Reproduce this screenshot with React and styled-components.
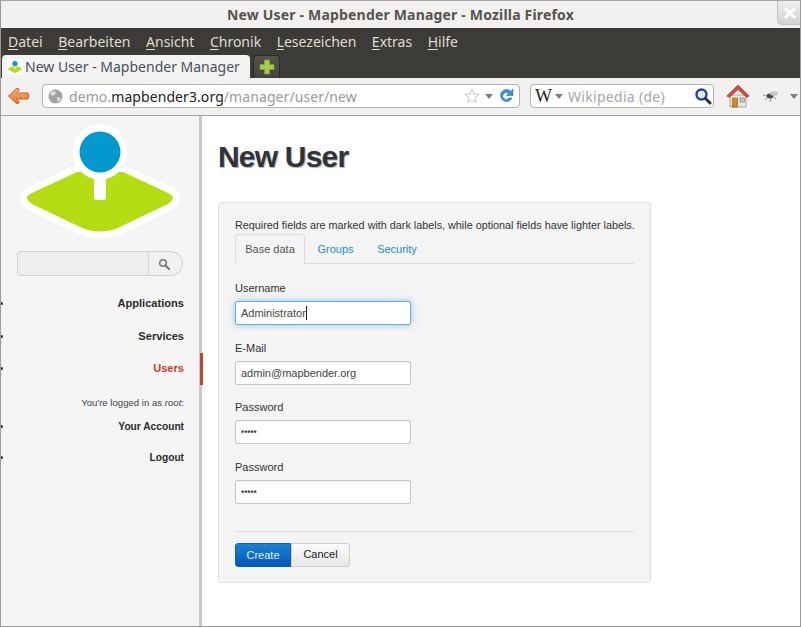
import styled, { createGlobalStyle } from 'styled-components';

const GlobalStyle = createGlobalStyle`
    html, body { margin: 0; padding: 0; background: #fff; }
    * { box-sizing: border-box; }
`;

const Win = styled.div`
    width: 801px;
    height: 627px;
    display: flex;
    flex-direction: column;
    overflow: hidden;
    border-left: 1px solid #9a9a98;
    border-right: 1px solid #9a9a98;
    border-bottom: 1px solid #9a9a98;
`;

const TitleBar = styled.div`
    height: 28px;
    flex: none;
    position: relative;
    display: flex;
    align-items: center;
    justify-content: center;
    background: #f2f1ef;
    border-top: 1px solid #a8a8a6;
    font: bold 14px "Noto Sans", sans-serif;
    letter-spacing: 0.18px;
    color: #57544e;
`;

const CloseBtn = styled.div`
    position: absolute;
    right: -1px;
    top: 0;
    width: 24px;
    height: 24px;
    background: linear-gradient(#f0efee, #d4d3d1);
    border-left: 1px solid #c4c3c1;
    border-bottom: 1px solid #c4c3c1;
    border-bottom-left-radius: 5px;
    display: flex;
    align-items: center;
    justify-content: center;
`;

const MenuBar = styled.div`
    height: 27px;
    flex: none;
    background: #3c3b37;
    display: flex;
    align-items: center;
    gap: 15.5px;
    padding: 0 0 0 7px;
    font: 14px "Noto Sans", sans-serif;
    color: #dfdbd2;
    u { text-underline-offset: 2px; }
`;

const TabStrip = styled.div`
    height: 23px;
    flex: none;
    background: #3c3b37;
    display: flex;
    align-items: flex-end;
    padding-left: 1px;
    gap: 3px;
`;

const ActiveTab = styled.div`
    width: 248px;
    height: 23px;
    background: #f4f3f1;
    border-radius: 4px 4px 0 0;
    display: flex;
    align-items: center;
    gap: 2px;
    padding-left: 5px;
    font: 14px "Noto Sans", sans-serif;
    color: #45505e;
    white-space: nowrap;
`;

const NewTab = styled.div`
    width: 27px;
    height: 23px;
    background: linear-gradient(#55534e, #45433f);
    border: 1px solid #2c2b28;
    border-bottom: none;
    border-radius: 4px 4px 0 0;
    display: flex;
    align-items: center;
    justify-content: center;
`;

const NavBar = styled.div`
    height: 38px;
    flex: none;
    background: #f2f1ef;
    border-bottom: 1px solid #a0a09e;
    display: flex;
    align-items: center;
    padding: 0 0 1px 6px;
`;

const UrlBox = styled.div`
    height: 24px;
    background: #fff;
    border: 1px solid #b5b3ae;
    border-radius: 4px;
    display: flex;
    align-items: center;
    font: 14px "Noto Sans", sans-serif;
    color: #9a9a9a;
    white-space: nowrap;
    width: ${p => p.$w}px;
    margin-left: ${p => p.$ml}px;
    padding: 0 ${p => p.$pr}px 0 ${p => p.$pl}px;
`;

const UrlText = styled.span`
    margin-left: 6px;
    letter-spacing: 0.08px;
`;

const Host = styled.span`
    color: #222;
`;

const Spacer = styled.div`
    flex: 1;
`;

const Gap = styled.div`
    flex: none;
    width: ${p => p.$w}px;
`;

const Drop = styled.span`
    flex: none;
    width: 0;
    height: 0;
    border-left: 4px solid transparent;
    border-right: 4px solid transparent;
    border-top: 5px solid #7d7d7b;
    margin: 0 ${p => p.$mr || 0}px 0 ${p => p.$ml || 0}px;
`;

const WikiW = styled.span`
    font: 18px "Liberation Serif", serif;
    color: #222;
    margin-right: 3px;
`;

const WikiHint = styled.span`
    color: #a8a8a8;
    letter-spacing: 0.3px;
`;

const Body = styled.div`
    flex: 1;
    display: flex;
    min-height: 0;
`;

const Sidebar = styled.aside`
    width: 201px;
    flex: none;
    background: #f5f5f5;
    border-right: 3px solid #c8c8c8;
    display: flex;
    flex-direction: column;
    align-items: center;
    padding-top: 8px;
    font-family: "Liberation Sans", sans-serif;
`;

const Search = styled.div`
    width: 166px;
    height: 25px;
    margin: 11px 1px 0 0;
    flex: none;
    display: flex;
    border: 1px solid #d2d2d2;
    border-radius: 3px 12px 12px 3px;
    background: #f1f1f1;
    overflow: hidden;
`;

const SearchInput = styled.div`
    width: 131px;
    background: #eeeeee;
    border-right: 1px solid #d2d2d2;
`;

const SearchBtn = styled.div`
    flex: 1;
    display: flex;
    align-items: center;
    justify-content: center;
    padding-right: 3px;
`;

const Menu = styled.ul`
    list-style: none;
    margin: 19px 0 0 0;
    padding: 0;
    width: 100%;
    position: relative;
`;

const Item = styled.li`
    position: relative;
    height: ${p => p.$h}px;
    padding-right: 15px;
    text-align: right;
    font-size: ${p => (p.$small ? '10.2px' : '11.1px')};
    font-weight: bold;
    line-height: 17px;
    color: ${p => (p.$active ? '#c9402f' : '#2b2b2b')};

    &::before {
        content: '';
        position: absolute;
        left: -1px;
        top: 7px;
        width: 3px;
        height: 3px;
        border-radius: 50%;
        background: #333;
    }
`;

const ActiveMark = styled.span`
    position: absolute;
    right: -4px;
    top: -7px;
    width: 3px;
    height: 32px;
    background: #c9402f;
`;

const LoginNote = styled.li`
    height: 22px;
    padding-right: 15px;
    text-align: right;
    font-size: 9.6px;
    line-height: 14px;
    color: #444;
`;

const Main = styled.main`
    flex: 1;
    padding: 22px 0 0 16px;
    background: #fff;
    font-family: "Liberation Sans", sans-serif;
`;

const Title = styled.h1`
    margin: 0 0 26px 0;
    font-size: 30px;
    line-height: 38px;
    font-weight: bold;
    letter-spacing: -0.8px;
    color: #333;
    text-shadow: 1px 1px 1px #9fb4c8;
`;

const Panel = styled.section`
    width: 433px;
    height: 381px;
    background: #f4f4f4;
    border: 1px solid #e0e0e0;
    border-radius: 3px;
    padding: 14px 16px 0 16px;
`;

const Hint = styled.p`
    margin: 0;
    font-size: 10.8px;
    line-height: 17px;
    color: #333;
    white-space: nowrap;
`;

const Tabs = styled.div`
    display: flex;
    height: 30px;
    border-bottom: 1px solid #dcdcdc;
    font-size: 11px;
    margin-bottom: 17px;
`;

const Tab = styled.div`
    height: 30px;
    width: ${p => p.$w}px;
    display: flex;
    align-items: center;
    justify-content: center;
    color: ${p => (p.$on ? '#555' : '#1a8fce')};
    ${p => p.$on && `
        border: 1px solid #dcdcdc;
        border-bottom: 1px solid #f4f4f4;
        border-radius: 3px 3px 0 0;
    `}
`;

const Group = styled.div`
    margin-bottom: 15.7px;
`;

const Label = styled.div`
    font-size: 11px;
    line-height: 14px;
    margin-bottom: 6px;
    color: #333;
`;

const Field = styled.div`
    width: 176px;
    height: 24px;
    background: #fff;
    border: 1px solid ${p => (p.$focus ? '#66afe9' : '#c6c6c6')};
    border-radius: 2px;
    padding: 0 5px;
    display: flex;
    align-items: center;
    font-size: 11px;
    color: ${p => (p.$secret ? '#445' : '#444')};
    box-shadow: ${p => (p.$focus ? '0 0 6px rgba(102, 175, 233, 0.7)' : 'inset 0 1px 1px rgba(0, 0, 0, 0.05)')};
`;

const Dots = styled.span`
    font-size: 9px;
    font-weight: bold;
    letter-spacing: 0;
`;

const Caret = styled.span`
    width: 1px;
    height: 14px;
    background: #222;
`;

const Divider = styled.hr`
    margin: 27.2px 0 11px;
    border: none;
    border-top: 1px solid #dedede;
`;

const Buttons = styled.div`
    display: flex;
`;

const Button = styled.div`
    height: 24px;
    width: ${p => p.$w}px;
    display: flex;
    align-items: center;
    justify-content: center;
    padding-bottom: ${p => (p.$primary ? 0 : 2)}px;
    font-size: 11px;
    color: ${p => (p.$primary ? '#e8f1fa' : '#222')};
    background: ${p => (p.$primary ? 'linear-gradient(#1a82d2, #0058b8)' : 'linear-gradient(#fafafa, #e8e8e8)')};
    border: 1px solid ${p => (p.$primary ? '#0a62b8' : '#cfcfcf')};
    border-radius: ${p => (p.$primary ? '3px 0 0 3px' : '0 3px 3px 0')};
`;

const LOGO_BODY = 'M57 48 L14 68 Q7 71 7 74 Q7 77 14 81 L60 103 Q80 112 100 103 L146 81 Q153 77 153 74 Q153 71 146 68 L103 48 Z';

const Logo = () => (
    <svg width="160" height="116" viewBox="0 0 160 116">
        <path d={LOGO_BODY} fill="#fff" stroke="#fff" strokeWidth="14" strokeLinejoin="round" />
        <path d={LOGO_BODY} fill="#b5dd14" />
        <circle cx="80" cy="28" r="27.5" fill="#fff" />
        <rect x="74" y="50" width="12" height="26" rx="3" fill="#fff" />
        <circle cx="80" cy="28" r="20.5" fill="#0499cc" />
    </svg>
);

const Favicon = () => (
    <svg width="16" height="16" viewBox="0 0 16 16">
        <rect width="16" height="16" fill="#fff" />
        <path d="M0.5 10 L5 7.5 L11 7.5 L15.5 10 L9.5 13.5 Q8 14 6.5 13.5 Z" fill="#b5dd14" />
        <circle cx="8" cy="4.5" r="2.6" fill="#0499cc" />
        <rect x="7.4" y="7" width="1.2" height="3" fill="#fff" />
    </svg>
);

const Plus = () => (
    <svg width="16" height="16" viewBox="0 0 16 16">
        <path d="M5.5 1 H10.5 V5.5 H15 V10.5 H10.5 V15 H5.5 V10.5 H1 V5.5 H5.5 Z" fill="#a6cc4e" stroke="#7f9e3a" strokeWidth="0.8" />
    </svg>
);

const BackArrow = () => (
    <svg width="24" height="20" viewBox="0 0 24 20">
        <defs>
            <linearGradient id="arr" x1="0" y1="0" x2="0" y2="1">
                <stop offset="0" stopColor="#f8b27a" />
                <stop offset="1" stopColor="#e6702a" />
            </linearGradient>
        </defs>
        <path d="M1.5 10 L10 2 L12.5 3.5 L9.5 7 H21 Q23 10 21 13 H9.5 L12.5 16.5 L10 18 Z" fill="url(#arr)" stroke="#c9632a" strokeWidth="1" strokeLinejoin="round" />
    </svg>
);

const Globe = () => (
    <svg width="15" height="15" viewBox="0 0 15 15">
        <circle cx="7.5" cy="7.5" r="7" fill="#a2a2a2" />
        <path d="M4 2 L8 3 L7 6 L4 7 L2 5 Z M9 8 L13 9 L11 13 L9 12 Z" fill="#dcdcdc" />
    </svg>
);

const Star = () => (
    <svg width="16" height="16" viewBox="0 0 16 16">
        <path d="M8 1.5 L10 6 L15 6.4 L11.2 9.6 L12.4 14.5 L8 11.8 L3.6 14.5 L4.8 9.6 L1 6.4 L6 6 Z" fill="#fff" stroke="#c9c9c9" strokeWidth="1" />
    </svg>
);

const Reload = () => (
    <svg width="16" height="16" viewBox="0 0 16 16">
        <path d="M13 3.5 A6 6 0 1 0 14 10 L11 10 A3.4 3.4 0 1 1 10.5 5.5 L8.5 7.5 H15 V1 Z" fill="#3f8fd8" stroke="#2a6fb5" strokeWidth="0.6" />
    </svg>
);

const Magnifier = () => (
    <svg width="18" height="18" viewBox="0 0 18 18">
        <circle cx="7.5" cy="7.5" r="5" fill="#dfeaf8" stroke="#24459c" strokeWidth="2.4" />
        <path d="M11.5 11.5 L16 16" stroke="#333" strokeWidth="3" strokeLinecap="round" />
    </svg>
);

const Home = () => (
    <svg width="24" height="24" viewBox="0 0 24 24">
        <path d="M4 11 H20 V23 H4 Z" fill="#e9e9e4" stroke="#9a9a92" strokeWidth="0.8" />
        <rect x="6.5" y="14" width="5" height="9" fill="#d98a1e" stroke="#8a5a12" strokeWidth="0.6" />
        <rect x="14" y="14" width="4.5" height="4" fill="#b9c6cc" stroke="#777" strokeWidth="0.6" />
        <path d="M0.8 12 L12 1 L23.2 12 L20.5 13.5 L12 5.5 L3.5 13.5 Z" fill="#cf4a42" stroke="#a83229" strokeWidth="0.6" />
    </svg>
);

const Fly = () => (
    <svg width="18" height="14" viewBox="0 0 18 14">
        <ellipse cx="8" cy="7" rx="3.5" ry="2.5" fill="#4a4a48" />
        <ellipse cx="12" cy="4.5" rx="4" ry="2.2" fill="#c6c6c4" />
        <path d="M1 6 L5 7 M3 11 L6 8 M9 9 L8 13 M12 8 L14 10" stroke="#777" strokeWidth="0.8" />
    </svg>
);

const SearchGlyph = () => (
    <svg width="12" height="12" viewBox="0 0 12 12">
        <circle cx="5" cy="5" r="3.3" fill="none" stroke="#777" strokeWidth="1.6" />
        <path d="M7.5 7.5 L11 11" stroke="#777" strokeWidth="2" strokeLinecap="round" />
    </svg>
);

const CloseGlyph = () => (
    <svg width="12" height="12" viewBox="0 0 12 12">
        <path d="M2 2 L10 10 M10 2 L2 10" stroke="#fff" strokeWidth="3" strokeLinecap="round" />
    </svg>
);

const menuLabels = [
    ['D', 'atei'],
    ['B', 'earbeiten'],
    ['A', 'nsicht'],
    ['C', 'hronik'],
    ['L', 'esezeichen'],
    ['E', 'xtras'],
    ['H', 'ilfe'],
];

const App = () => (
    <>
        <GlobalStyle />
        <Win>
            <TitleBar>
                New User - Mapbender Manager - Mozilla Firefox
                <CloseBtn><CloseGlyph /></CloseBtn>
            </TitleBar>
            <MenuBar>
                {menuLabels.map(([key, rest]) => (
                    <span key={key}><u>{key}</u>{rest}</span>
                ))}
            </MenuBar>
            <TabStrip>
                <ActiveTab><Favicon />New User - Mapbender Manager</ActiveTab>
                <NewTab><Plus /></NewTab>
            </TabStrip>
            <NavBar>
                <BackArrow />
                <UrlBox $w={478} $ml={11} $pl={5} $pr={5}>
                    <Globe />
                    <UrlText>demo.<Host>mapbender3.org</Host>/manager/user/new</UrlText>
                    <Spacer />
                    <Star />
                    <Drop $ml={5} $mr={5} />
                    <Reload />
                </UrlBox>
                <UrlBox $w={184} $ml={10} $pl={4} $pr={1}>
                    <WikiW>W</WikiW>
                    <Drop $mr={5} />
                    <WikiHint>Wikipedia (de)</WikiHint>
                    <Spacer />
                    <Magnifier />
                </UrlBox>
                <Gap $w={12} />
                <Home />
                <Gap $w={12} />
                <Fly />
                <Gap $w={10} />
                <Drop />
            </NavBar>
            <Body>
                <Sidebar>
                    <Logo />
                    <Search>
                        <SearchInput />
                        <SearchBtn><SearchGlyph /></SearchBtn>
                    </Search>
                    <Menu>
                        <Item $h={33}>Applications</Item>
                        <Item $h={32}>Services</Item>
                        <Item $h={36} $active>Users<ActiveMark /></Item>
                        <LoginNote>You're logged in as <em>root</em>:</LoginNote>
                        <Item $h={31} $small>Your Account</Item>
                        <Item $h={31} $small>Logout</Item>
                    </Menu>
                </Sidebar>
                <Main>
                    <Title>New User</Title>
                    <Panel>
                        <Hint>Required fields are marked with dark labels, while optional fields have lighter labels.</Hint>
                        <Tabs>
                            <Tab $w={70} $on>Base data</Tab>
                            <Tab $w={61}>Groups</Tab>
                            <Tab $w={62}>Security</Tab>
                        </Tabs>
                        <Group>
                            <Label>Username</Label>
                            <Field $focus>Administrator<Caret /></Field>
                        </Group>
                        <Group>
                            <Label>E-Mail</Label>
                            <Field>admin@mapbender.org</Field>
                        </Group>
                        <Group>
                            <Label>Password</Label>
                            <Field $secret><Dots>•••••</Dots></Field>
                        </Group>
                        <Group>
                            <Label>Password</Label>
                            <Field $secret><Dots>•••••</Dots></Field>
                        </Group>
                        <Divider />
                        <Buttons>
                            <Button $primary $w={56}>Create</Button>
                            <Button $w={59}>Cancel</Button>
                        </Buttons>
                    </Panel>
                </Main>
            </Body>
        </Win>
    </>
);

export default App;
